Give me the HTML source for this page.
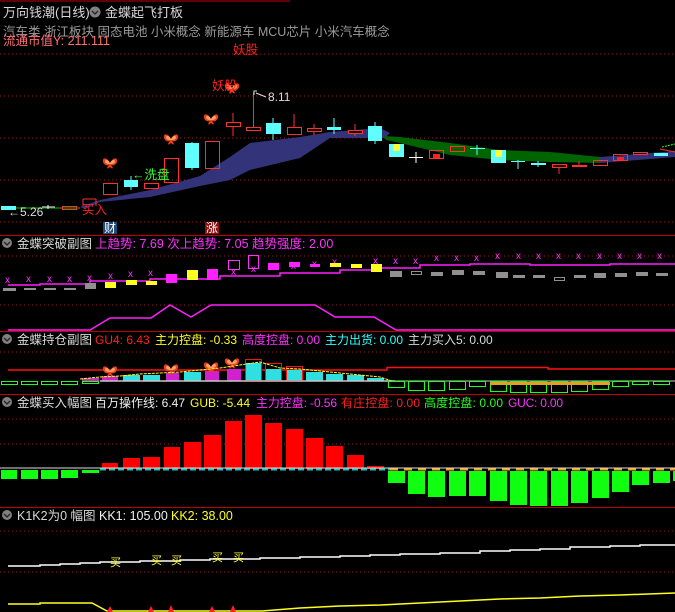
<!DOCTYPE html>
<html><head><meta charset="utf-8"><style>
html,body{margin:0;padding:0;background:#000;}
svg{display:block;font-family:"Liberation Sans","Noto Sans CJK SC",sans-serif;font-size:12px;}
</style></head><body>
<svg width="675" height="612" viewBox="0 0 675 612" xmlns="http://www.w3.org/2000/svg">
<defs>
<g id="bf">
<path d="M0,0 C-3,-6 -8,-6 -7,-1 C-6,2 -3,3 -1,2 C-4,5 -3,7 0,4 C3,7 4,5 1,2 C3,3 6,2 7,-1 C8,-6 3,-6 0,0Z" fill="#e84020"/>
<path d="M0,0 C-2,-4 -5,-4 -5,-1 C-4,1 -2,1 0,1 C2,1 4,1 5,-1 C5,-4 2,-4 0,0Z" fill="#ffa060"/>
</g>
</defs>
<rect width="675" height="612" fill="#000"/>
<line x1="0" y1="1" x2="290" y2="1" stroke="#c00000"/>
<g stroke="#a01818" stroke-dasharray="1,3">
<line x1="0" y1="54" x2="675" y2="54"/><line x1="0" y1="96" x2="675" y2="96"/><line x1="0" y1="138" x2="675" y2="138"/><line x1="0" y1="180" x2="675" y2="180"/><line x1="0" y1="222" x2="675" y2="222"/>
<line x1="0" y1="256" x2="675" y2="256"/><line x1="0" y1="305" x2="675" y2="305"/>
<line x1="0" y1="352" x2="675" y2="352"/>
<line x1="0" y1="419" x2="675" y2="419"/><line x1="0" y1="444" x2="675" y2="444"/>
<line x1="0" y1="531" x2="675" y2="531"/><line x1="0" y1="572" x2="675" y2="572"/>
</g>
<g stroke="#c00000"><line x1="0" y1="235.5" x2="675" y2="235.5"/><line x1="0" y1="331.5" x2="675" y2="331.5"/><line x1="0" y1="394.5" x2="675" y2="394.5"/><line x1="0" y1="507.5" x2="675" y2="507.5"/></g>

<!-- band -->
<path d="M80,207 L100,200 L150,190 L200,176 L230,157 L250,143 L300,137 L330,132 L380,128 L390,133 L385,138 L330,138 L300,158 L250,170 L230,180 L200,186 L150,197 L100,202 L85,209Z" fill="#33337a"/>
<path d="M383,136 L400,137 L450,143 L500,150 L550,152 L600,157 L600,163 L550,162 L500,160 L450,155 L400,143 L386,140Z" fill="#006400"/>
<path d="M600,157 L675,151 L675,157 L600,163Z" fill="#33337a"/>
<path d="M15,208 L80,208" stroke="#006400" stroke-width="2"/>

<g stroke-width="1">
<rect x="1" y="206" width="15" height="4" fill="#60ffff"/>
<line x1="42" y1="207" x2="55" y2="207" stroke="#fff"/><line x1="48" y1="205" x2="48" y2="209" stroke="#fff"/>
<rect x="62.5" y="206.5" width="14" height="3" fill="none" stroke="#ff3030"/>
<rect x="103.5" y="183.5" width="14" height="11" fill="none" stroke="#ff3030"/>
<line x1="131" y1="176" x2="131" y2="190" stroke="#60ffff"/><rect x="124" y="180" width="14" height="7" fill="#60ffff"/>
<rect x="144.5" y="183.5" width="14" height="5" fill="none" stroke="#ff3030"/>
<rect x="164.5" y="158.5" width="14" height="24" fill="none" stroke="#ff3030"/>
<line x1="192" y1="142" x2="192" y2="170" stroke="#60ffff"/><rect x="185" y="143" width="14" height="25" fill="#60ffff"/>
<rect x="205.5" y="141.5" width="14" height="27" fill="none" stroke="#ff3030"/>
<line x1="233" y1="113" x2="233" y2="136" stroke="#ff3030"/><rect x="226.5" y="122.5" width="14" height="4" fill="#000" stroke="#ff3030"/>
<line x1="253.5" y1="92" x2="253.5" y2="127" stroke="#ff3030"/><rect x="246.5" y="127.5" width="14" height="3" fill="#000" stroke="#ff3030"/>
<line x1="273" y1="118" x2="273" y2="140" stroke="#60ffff"/><rect x="266" y="123" width="15" height="11" fill="#60ffff"/>
<line x1="294" y1="114" x2="294" y2="135" stroke="#ff3030"/><rect x="287.5" y="127.5" width="14" height="7" fill="#000" stroke="#ff3030"/>
<line x1="314" y1="124" x2="314" y2="135" stroke="#ff3030"/><rect x="307.5" y="128.5" width="14" height="3" fill="#000" stroke="#ff3030"/>
<line x1="334" y1="118" x2="334" y2="134" stroke="#60ffff"/><rect x="327" y="127" width="14" height="3" fill="#60ffff"/>
<line x1="355" y1="124" x2="355" y2="136" stroke="#ff3030"/><rect x="348.5" y="130.5" width="14" height="3" fill="#000" stroke="#ff3030"/>
<line x1="375" y1="122" x2="375" y2="144" stroke="#60ffff"/><rect x="368" y="126" width="14" height="15" fill="#60ffff"/>
<rect x="389" y="144" width="15" height="13" fill="#60ffff"/><rect x="393" y="144" width="7" height="7" fill="#ffff30"/>
<line x1="409" y1="157.5" x2="423" y2="157.5" stroke="#fff"/><line x1="416" y1="152" x2="416" y2="163" stroke="#fff"/>
<rect x="429.5" y="150.5" width="14" height="8" fill="none" stroke="#ff3030"/><rect x="433" y="154" width="7" height="4" fill="#ff2020"/>
<rect x="450.5" y="146.5" width="14" height="5" fill="none" stroke="#ff3030"/>
<line x1="470" y1="148.5" x2="485" y2="148.5" stroke="#60ffff"/><line x1="477" y1="145" x2="477" y2="155" stroke="#60ffff"/>
<rect x="491" y="150" width="15" height="13" fill="#60ffff"/><rect x="495" y="150" width="7" height="7" fill="#ffff30"/>
<line x1="511" y1="161.5" x2="525" y2="161.5" stroke="#60ffff"/><line x1="518" y1="160" x2="518" y2="169" stroke="#60ffff"/>
<rect x="531" y="163" width="15" height="2" fill="#60ffff"/><line x1="538" y1="161" x2="538" y2="167" stroke="#60ffff"/>
<rect x="552.5" y="164.5" width="14" height="3" fill="none" stroke="#ff3030"/><line x1="559" y1="167" x2="559" y2="174" stroke="#ff3030"/>
<rect x="572" y="165" width="15" height="2" fill="#ff3030"/><line x1="579" y1="161" x2="579" y2="166" stroke="#ff3030"/>
<rect x="593.5" y="160.5" width="14" height="5" fill="none" stroke="#ff3030"/>
<rect x="613.5" y="154.5" width="14" height="6" fill="none" stroke="#ff3030"/><rect x="617" y="157" width="7" height="3" fill="#ff2020"/>
<rect x="633.5" y="152.5" width="14" height="2" fill="none" stroke="#ff3030"/>
<rect x="654" y="153" width="14" height="3" fill="#60ffff"/><line x1="660" y1="149" x2="675" y2="152" stroke="#ff3030"/><line x1="662" y1="147" x2="675" y2="144" stroke="#30ff30" stroke-dasharray="2,1"/>
</g>
<use href="#bf" x="110" y="163"/><use href="#bf" x="171" y="139"/><use href="#bf" x="211" y="119"/><use href="#bf" x="232" y="88"/>
<line x1="83" y1="199" x2="96" y2="199" stroke="#ff3030"/><line x1="83" y1="199" x2="83" y2="206" stroke="#ff3030"/><line x1="96" y1="199" x2="96" y2="206" stroke="#ff3030"/>
<text x="3" y="17" fill="#d8d8d8" font-size="13">万向钱潮(日线)</text>
<circle cx="95" cy="12" r="5.5" fill="#808080"/><path d="M92,11 L95,14 L98,11" stroke="#222" fill="none" stroke-width="1.3"/>
<text x="105" y="17" fill="#d8d8d8" font-size="13">金蝶起飞打板</text>
<text x="3" y="36" fill="#9a9a9a" font-size="12.5">汽车类 浙江板块 固态电池 小米概念 新能源车 MCU芯片 小米汽车概念</text>
<text x="3" y="45" fill="#ff7070" font-size="12.5">流通市值Y:  211.111</text>
<text x="233" y="54" fill="#ff2020" font-size="12.5">妖股</text>
<text x="212" y="90" fill="#ff2020" font-size="12.5">妖股</text>
<path d="M254,95 L254,91 L257,91 M256,93 L266,97" stroke="#ddd" fill="none"/>
<text x="268" y="101" fill="#ddd" font-size="12">8.11</text>
<text x="132" y="179" fill="#30ff30" font-size="12.5">←洗盘</text>
<text x="8" y="216" fill="#ddd" font-size="12">←5.26</text>
<text x="82" y="214" fill="#ff2020" font-size="12.5">买入</text>
<rect x="103" y="222" width="14" height="12" fill="#1f4a7a"/><text x="104" y="232" fill="#fff" font-size="12">财</text>
<rect x="205" y="222" width="14" height="12" fill="#8a1010"/><text x="206" y="232" fill="#fff" font-size="12">涨</text>

<circle cx="7" cy="243" r="5" fill="#808080"/><path d="M4,242 L7,245 L10,242" stroke="#222" fill="none" stroke-width="1.3"/>
<text x="17" y="248" fill="#d8d8d8" font-size="12.5">金蝶突破副图</text>
<text x="95" y="248" fill="#ff30ff" font-size="12.5">上趋势: 7.69  次上趋势: 7.05  趋势强度: 2.00</text>
<path d="M8,285 H40 V284 H90 V281 H150 V279 H220 V276 H280 V273 H340 V270 H380 V268 H420 V265 H470 V264 H530 V265 H610 V264 H675" stroke="#ff20ff" fill="none" stroke-width="1.5"/>
<g fill="#ff30ff" font-size="10">
<text x="5" y="283">x</text><text x="26" y="282">x</text><text x="47" y="282">x</text><text x="67" y="282">x</text><text x="87" y="281">x</text><text x="108" y="279">x</text><text x="128" y="277">x</text><text x="148" y="276">x</text><text x="231" y="275">x</text><text x="251" y="272">x</text><text x="270" y="270">x</text><text x="291" y="269">x</text><text x="312" y="267">x</text><text x="332" y="265">x</text><text x="373" y="264">x</text><text x="393" y="264">x</text><text x="413" y="264">x</text><text x="434" y="261">x</text><text x="454" y="261">x</text><text x="474" y="261">x</text><text x="495" y="259">x</text><text x="516" y="259">x</text><text x="536" y="259">x</text><text x="556" y="259">x</text><text x="576" y="259">x</text><text x="597" y="259">x</text><text x="617" y="259">x</text><text x="637" y="259">x</text><text x="657" y="259">x</text>
</g>
<g fill="#909090">
<rect x="3" y="288" width="13" height="3"/><rect x="24" y="288" width="12" height="2"/><rect x="44" y="288" width="12" height="2"/><rect x="64" y="288" width="12" height="2"/><rect x="85" y="283" width="11" height="6"/>
<rect x="390" y="271" width="12" height="6"/><rect x="431" y="272" width="12" height="4"/><rect x="452" y="270" width="12" height="5"/><rect x="473" y="271" width="12" height="4"/><rect x="496" y="272" width="12" height="6"/><rect x="513" y="275" width="12" height="3"/><rect x="533" y="275" width="12" height="3"/><rect x="574" y="275" width="12" height="3"/><rect x="594" y="273" width="12" height="5"/><rect x="615" y="273" width="12" height="4"/><rect x="636" y="272" width="12" height="4"/><rect x="656" y="273" width="12" height="3"/>
</g>
<rect x="411.5" y="271.5" width="10" height="3" fill="none" stroke="#909090"/><rect x="554.5" y="277.5" width="10" height="3" fill="none" stroke="#909090"/>
<g fill="#ffff20"><rect x="105" y="282" width="11" height="6"/><rect x="126" y="280" width="11" height="5"/><rect x="146" y="281" width="11" height="4"/><rect x="187" y="270" width="11" height="10"/><rect x="330" y="263" width="11" height="4"/><rect x="351" y="264" width="11" height="4"/><rect x="371" y="264" width="11" height="8"/></g>
<g fill="#ff20ff"><rect x="166" y="274" width="11" height="9"/><rect x="207" y="269" width="11" height="11"/><rect x="268" y="263" width="11" height="7"/><rect x="289" y="262" width="11" height="5"/><rect x="310" y="264" width="10" height="3"/></g>
<rect x="228.5" y="260.5" width="11" height="9" fill="none" stroke="#ff30ff"/><rect x="248.5" y="255.5" width="10" height="13" fill="none" stroke="#ff30ff"/>
<path d="M8,330 H90 L110,318 H151 L170,305 L191,317 L211,305 H315 L335,317 H374 L396,330 H675" stroke="#ff20ff" fill="none" stroke-width="1.5"/>

<circle cx="7" cy="339" r="5" fill="#808080"/><path d="M4,338 L7,341 L10,338" stroke="#222" fill="none" stroke-width="1.3"/>
<text x="17" y="344" fill="#d8d8d8" font-size="12.5">金蝶持仓副图</text>
<text x="95" y="344" fill="#ff2020" font-size="12">GU4: 6.43</text>
<text x="155" y="344" fill="#ffff20" font-size="12">主力控盘: -0.33</text>
<text x="242" y="344" fill="#ff30ff" font-size="12">高度控盘: 0.00</text>
<text x="325" y="344" fill="#30ffff" font-size="12">主力出货: 0.00</text>
<text x="408" y="344" fill="#d8d8d8" font-size="12">主力买入5: 0.00</text>
<path d="M8,370 H387 V367.5 H548 V369 H675" stroke="#ff1010" fill="none" stroke-width="1.5"/>
<g fill="#30e0e0">
<rect x="123" y="375" width="17" height="6"/><rect x="143" y="375" width="17" height="6"/><rect x="184" y="372" width="17" height="9"/><rect x="245" y="363" width="17" height="18"/><rect x="265" y="369" width="17" height="12"/><rect x="286" y="370" width="17" height="11"/><rect x="306" y="372" width="17" height="9"/><rect x="326" y="374" width="17" height="7"/><rect x="347" y="375" width="17" height="6"/><rect x="367" y="378" width="17" height="3"/>
</g>
<g fill="#d020d0"><rect x="102" y="376" width="16" height="5"/><rect x="166" y="373" width="13" height="8"/><rect x="205" y="371" width="14" height="10"/><rect x="227" y="369" width="14" height="12"/><rect x="82" y="378" width="17" height="3"/></g>
<g fill="none" stroke="#ff1010"><rect x="245.5" y="359.5" width="16" height="21"/><rect x="265.5" y="363.5" width="16" height="17"/><rect x="286.5" y="366.5" width="16" height="14"/></g>
<use href="#bf" x="110" y="371"/><use href="#bf" x="171" y="369"/><use href="#bf" x="211" y="367"/><use href="#bf" x="232" y="363"/>
<path d="M80,379 L100,377 L120,376 L140,374 L160,373 L180,372 L200,370 L220,368 L240,365 L260,362 L280,368 L300,369 L320,371 L340,373 L360,375 L380,377 L392,381" stroke="#ffff20" fill="none" stroke-dasharray="3,1"/>
<line x1="100" y1="381" x2="395" y2="381" stroke="#c8c8c8" stroke-width="1.5"/>
<line x1="388" y1="381" x2="675" y2="381" stroke="#c8c8c8"/>
<g fill="none" stroke="#20ff20">
<rect x="1.5" y="381.5" width="16" height="3"/><rect x="21.5" y="381.5" width="16" height="3"/><rect x="41.5" y="381.5" width="16" height="3"/><rect x="61.5" y="381.5" width="16" height="3"/><rect x="82.5" y="381.5" width="16" height="2"/>
<rect x="388.5" y="381.5" width="16" height="6"/><rect x="408.5" y="381.5" width="16" height="9"/><rect x="428.5" y="381.5" width="16" height="9"/><rect x="449.5" y="381.5" width="16" height="8"/><rect x="469.5" y="381.5" width="16" height="5"/><rect x="490.5" y="381.5" width="16" height="10"/><rect x="510.5" y="381.5" width="16" height="11"/><rect x="530.5" y="381.5" width="16" height="11"/><rect x="551.5" y="381.5" width="16" height="11"/><rect x="571.5" y="381.5" width="16" height="10"/><rect x="592.5" y="381.5" width="16" height="8"/><rect x="612.5" y="381.5" width="16" height="5"/><rect x="632.5" y="381.5" width="16" height="3"/><rect x="653.5" y="381.5" width="16" height="3"/>
</g>
<rect x="490" y="382" width="120" height="3" fill="#e0a020"/>

<circle cx="7" cy="402" r="5" fill="#808080"/><path d="M4,401 L7,404 L10,401" stroke="#222" fill="none" stroke-width="1.3"/>
<text x="17" y="407" fill="#d8d8d8" font-size="12.5">金蝶买入幅图</text>
<text x="95" y="407" fill="#f0f0f0" font-size="12" textLength="90">百万操作线: 6.47</text>
<text x="190" y="407" fill="#ffff20" font-size="12" textLength="60">GUB: -5.44</text>
<text x="256" y="407" fill="#ff30ff" font-size="12" textLength="81">主力控盘: -0.56</text>
<text x="341" y="407" fill="#ff2020" font-size="12" textLength="79">有庄控盘: 0.00</text>
<text x="424" y="407" fill="#20ff20" font-size="12" textLength="79">高度控盘: 0.00</text>
<text x="508" y="407" fill="#ff30ff" font-size="12" textLength="55">GUC: 0.00</text>
<g fill="#ff0000">
<rect x="102" y="463" width="16" height="6"/><rect x="123" y="458" width="17" height="11"/><rect x="143" y="457" width="17" height="12"/><rect x="164" y="447" width="16" height="22"/><rect x="184" y="442" width="17" height="27"/><rect x="204" y="435" width="17" height="34"/><rect x="225" y="421" width="17" height="48"/><rect x="245" y="415" width="17" height="54"/><rect x="265" y="423" width="17" height="46"/><rect x="286" y="429" width="17" height="40"/><rect x="306" y="438" width="17" height="31"/><rect x="326" y="446" width="17" height="23"/><rect x="347" y="455" width="17" height="14"/><rect x="367" y="466" width="17" height="3"/>
</g>
<line x1="0" y1="468" x2="675" y2="468" stroke="#e0e0e0"/>
<line x1="100" y1="469.5" x2="390" y2="469.5" stroke="#20c0c0" stroke-width="2" stroke-dasharray="6,3"/>
<line x1="390" y1="469.5" x2="675" y2="469.5" stroke="#ffa020" stroke-width="2" stroke-dasharray="8,6"/>
<g fill="#10ff10">
<rect x="1" y="470" width="16" height="9"/><rect x="21" y="470" width="17" height="9"/><rect x="41" y="470" width="17" height="9"/><rect x="61" y="470" width="17" height="8"/><rect x="82" y="470" width="17" height="3"/>
<rect x="388" y="471" width="17" height="12"/><rect x="408" y="471" width="17" height="23"/><rect x="428" y="471" width="17" height="26"/><rect x="449" y="471" width="17" height="25"/><rect x="469" y="471" width="17" height="25"/><rect x="490" y="471" width="17" height="30"/><rect x="510" y="471" width="17" height="34"/><rect x="530" y="471" width="17" height="35"/><rect x="551" y="471" width="17" height="35"/><rect x="571" y="471" width="17" height="32"/><rect x="592" y="471" width="17" height="27"/><rect x="612" y="471" width="17" height="21"/><rect x="632" y="471" width="17" height="14"/><rect x="653" y="471" width="17" height="12"/><rect x="673" y="471" width="2" height="10"/>
</g>

<circle cx="7" cy="515" r="5" fill="#808080"/><path d="M4,514 L7,517 L10,514" stroke="#222" fill="none" stroke-width="1.3"/>
<text x="17" y="520" fill="#d8d8d8" font-size="12.5">K1K2为0 幅图</text>
<text x="99" y="520" fill="#f0f0f0" font-size="12.5">KK1: 105.00</text>
<text x="171" y="520" fill="#ffff20" font-size="12.5">KK2: 38.00</text>
<path d="M8,566 H40 V565 H60 V564 H80 V563 H100 V562 H140 V561 H180 V560 H210 V559 H260 V558 H300 V557 H340 V556 H370 V555 H400 V554 H440 V553 H480 V551 H510 V550 H540 V549 H570 V547 H610 V546 H640 V545 H675" stroke="#fff" fill="none" stroke-width="1.5"/>
<path d="M8,604 H40 V603 H92 L107,611 H262 L300,608 L340,606 L380,605 L420,603 L460,601 L500,599 L540,598 L580,596 L620,595 L675,593" stroke="#ffff20" fill="none" stroke-width="1.5"/>
<g fill="#ffff40" font-size="11"><text x="110" y="566">买</text><text x="151" y="564">买</text><text x="171" y="564">买</text><text x="212" y="561">买</text><text x="233" y="561">买</text></g>
<g fill="#ff2020"><path d="M107,612 L110,606 L113,612Z"/><path d="M148,612 L151,606 L154,612Z"/><path d="M168,612 L171,605 L174,612Z"/><path d="M209,612 L212,606 L215,612Z"/><path d="M230,612 L233,605 L236,612Z"/></g>
</svg>
</body></html>
